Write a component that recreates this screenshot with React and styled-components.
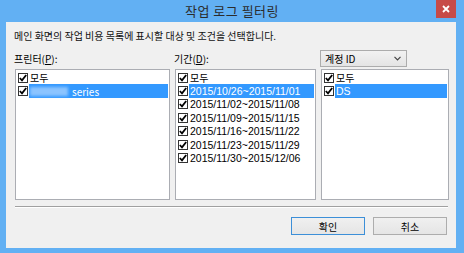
import React from 'react';
import styled, { createGlobalStyle } from 'styled-components';

const GlobalStyle = createGlobalStyle`
  html, body {
    margin: 0;
    padding: 0;
    background: #62b0f3;
  }
  body {
    font-family: "Liberation Sans", "Noto Sans CJK KR", sans-serif;
    font-size: 11px;
    color: #000;
  }
`;

const Frame = styled.div`
  width: 464px;
  height: 253px;
  box-sizing: border-box;
  background: #62b0f3;
  padding: 0 8px 5px 6px;
  display: flex;
  flex-direction: column;
`;

const TitleBar = styled.div`
  height: 22px;
  display: grid;
  grid-template-columns: 1fr auto 1fr;
  align-items: start;
  margin-right: -8px;
  margin-left: -6px;
`;

const Title = styled.div`
  grid-column: 2;
  font-family: "Noto Sans CJK KR", sans-serif;
  font-size: 13px;
  line-height: 22px;
  color: #2b2b2b;
  letter-spacing: 0.5px;
`;

const Close = styled.div`
  grid-column: 3;
  justify-self: end;
  margin-right: 8px;
  width: 20px;
  height: 18px;
  background: #c74b48;
  display: flex;
  align-items: center;
  justify-content: center;
`;

const Client = styled.div`
  flex: 1;
  background: #f0f0f0;
  padding: 7px 7px 0 8px;
  display: flex;
  flex-direction: column;
`;

const Desc = styled.div`
  font-family: "Noto Sans CJK KR", sans-serif;
  font-size: 10px;
  line-height: 13px;
  color: #111;
  height: 20px;
`;

const Columns = styled.div`
  display: grid;
  grid-template-columns: 155px 141px 128px;
  column-gap: 5px;
  margin-left: 1px;
`;

const Head = styled.div`
  height: 19px;
  display: flex;
  align-items: center;
  margin-bottom: 1px;
`;

const Label = styled.span`
  font-family: "Noto Sans CJK KR", sans-serif;
  font-size: 10px;
  margin-left: -1px;
  u { text-decoration: underline; }
`;

const Combo = styled.div`
  width: 87px;
  height: 17px;
  box-sizing: border-box;
  border: 1px solid #acacac;
  background: linear-gradient(#f2f2f2, #e4e4e4);
  display: flex;
  align-items: center;
  justify-content: space-between;
  padding: 0 5px 0 4px;
  margin-left: -1px;
  font-family: "Noto Sans CJK KR", sans-serif;
  font-size: 10px;
`;

const List = styled.div`
  height: 131px;
  box-sizing: border-box;
  border: 1px solid #abadb3;
  background: #fff;
  padding: 1px;
`;

const Row = styled.div`
  height: 13.4px;
  display: flex;
  align-items: center;
  padding-left: 1px;
`;

const Box = styled.span`
  width: 10px;
  height: 10px;
  border: 1px solid #333;
  background: #fff;
  box-sizing: border-box;
  display: flex;
  align-items: center;
  justify-content: center;
  flex: none;
  margin-right: 1px;
`;

const Text = styled.span`
  flex: 1;
  height: 100%;
  display: flex;
  align-items: center;
  padding-left: 1px;
  background: ${p => (p.$sel ? '#3399ff' : 'transparent')};
  color: ${p => (p.$sel ? '#fff' : '#000')};
  font-family: ${p => (p.$big ? '"Liberation Sans", sans-serif' : '"Noto Sans CJK KR", sans-serif')};
  font-size: ${p => (p.$big ? '10.5px' : '10px')};
  white-space: nowrap;
`;

const Blur = styled.span`
  display: inline-block;
  width: 38px;
  height: 9px;
  margin-right: 4px;
  background: #8cc4ff;
  filter: blur(1.5px);
`;

const Divider = styled.div`
  height: 0;
  border-top: 1px solid #a0a0a0;
  border-bottom: 1px solid #fff;
  margin: 6px 0 0 1px;
  width: 433px;
`;

const Buttons = styled.div`
  display: flex;
  justify-content: flex-end;
  gap: 8px;
  margin-top: 9px;
  padding-right: 2px;
`;

const Button = styled.div`
  width: 74px;
  height: 18px;
  box-sizing: border-box;
  border: 1px solid ${p => (p.$def ? '#3c8fd8' : '#adadad')};
  background: linear-gradient(#f0f0f0, #e5e5e5);
  display: flex;
  align-items: center;
  justify-content: center;
  font-family: "Noto Sans CJK KR", sans-serif;
  font-size: 10px;
`;

function Check() {
  return (
    <svg width="8" height="8" viewBox="0 0 8 8">
      <path d="M0.8 4 L3 6.3 L7.2 1" stroke="#000" strokeWidth="1.8" fill="none" />
    </svg>
  );
}

function Item({ children, sel, big }) {
  return (
    <Row>
      <Box><Check /></Box>
      <Text $sel={sel} $big={big}>{children}</Text>
    </Row>
  );
}

const periods = [
  '2015/10/26~2015/11/01',
  '2015/11/02~2015/11/08',
  '2015/11/09~2015/11/15',
  '2015/11/16~2015/11/22',
  '2015/11/23~2015/11/29',
  '2015/11/30~2015/12/06',
];

export default function App() {
  return (
    <>
      <GlobalStyle />
      <Frame>
        <TitleBar>
          <Title>작업 로그 필터링</Title>
          <Close>
            <svg width="8" height="8" viewBox="0 0 8 8">
              <path d="M1 1 L7 7 M7 1 L1 7" stroke="#fff" strokeWidth="1.8" />
            </svg>
          </Close>
        </TitleBar>
        <Client>
          <Desc>메인 화면의 작업 비용 목록에 표시할 대상 및 조건을 선택합니다.</Desc>
          <Columns>
            <div>
              <Head><Label>프린터(<u>P</u>):</Label></Head>
              <List>
                <Item>모두</Item>
                <Item sel><Blur />series</Item>
              </List>
            </div>
            <div>
              <Head><Label>기간(<u>D</u>):</Label></Head>
              <List>
                <Item>모두</Item>
                {periods.map((p, i) => (
                  <Item key={p} sel={i === 0} big>{p}</Item>
                ))}
              </List>
            </div>
            <div>
              <Head>
                <Combo>
                  <span>계정 ID</span>
                  <svg width="7" height="5" viewBox="0 0 7 5">
                    <path d="M0.5 0.8 L3.5 3.8 L6.5 0.8" stroke="#444" strokeWidth="1.2" fill="none" />
                  </svg>
                </Combo>
              </Head>
              <List>
                <Item>모두</Item>
                <Item sel big>DS</Item>
              </List>
            </div>
          </Columns>
          <Divider />
          <Buttons>
            <Button $def>확인</Button>
            <Button>취소</Button>
          </Buttons>
        </Client>
      </Frame>
    </>
  );
}
